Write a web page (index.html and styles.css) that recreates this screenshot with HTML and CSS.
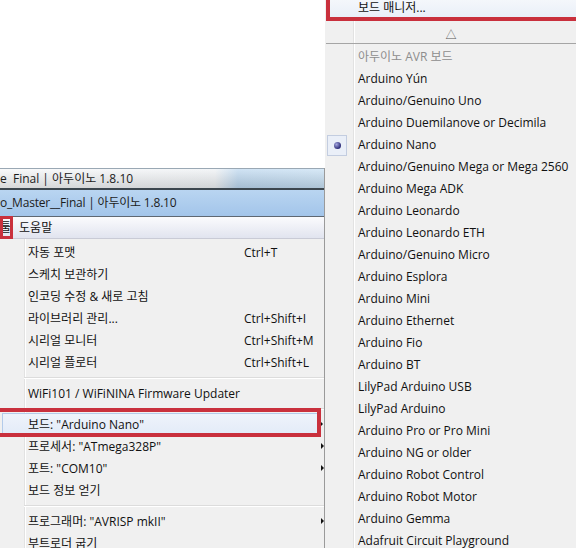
FILE: index.html
```html
<!DOCTYPE html>
<html lang="ko">
  <head>
    <meta charset="UTF-8" />
    <meta name="viewport" content="width=device-width, initial-scale=1.0" />
    <title>아두이노 보드 선택</title>
    <link rel="stylesheet" href="styles.css">
  </head>
  <body>
    <div class="ide">
      <div class="desk"></div>

      <div class="win">
        <div class="title back">e&nbsp;&nbsp;Final | 아두이노 1.8.10</div>
        <div class="title front">o_Master__Final | 아두이노 1.8.10</div>

        <div class="menubar">
          <span class="top">툴</span>
          <span class="top">도움말</span>
        </div>

        <div class="menu">
          <div class="item"><span class="label">자동 포맷</span><span>Ctrl+T</span></div>
          <div class="item"><span class="label">스케치 보관하기</span></div>
          <div class="item"><span class="label">인코딩 수정 &amp; 새로 고침</span></div>
          <div class="item"><span class="label">라이브러리 관리...</span><span>Ctrl+Shift+I</span></div>
          <div class="item"><span class="label">시리얼 모니터</span><span>Ctrl+Shift+M</span></div>
          <div class="item"><span class="label">시리얼 플로터</span><span>Ctrl+Shift+L</span></div>
          <div class="sep"></div>
          <div class="item"><span class="label">WiFi101 / WiFiNINA Firmware Updater</span></div>
          <div class="sep"></div>
          <div class="item hover"><span class="label">보드: "Arduino Nano"</span><i class="sub"></i></div>
          <div class="item"><span class="label">프로세서: "ATmega328P"</span><i class="sub"></i></div>
          <div class="item"><span class="label">포트: "COM10"</span><i class="sub"></i></div>
          <div class="item"><span class="label">보드 정보 얻기</span></div>
          <div class="sep"></div>
          <div class="item"><span class="label">프로그래머: "AVRISP mkII"</span><i class="sub"></i></div>
          <div class="item"><span class="label">부트로더 굽기</span></div>
        </div>
      </div>
    </div>

    <div class="boards">
      <div class="board hover">보드 매니저...</div>
      <div class="scroll">△</div>
      <div class="board group">아두이노 AVR 보드</div>
      <div class="board">Arduino Yún</div>
      <div class="board">Arduino/Genuino Uno</div>
      <div class="board">Arduino Duemilanove or Decimila</div>
      <div class="board picked"><span class="radio"><i></i></span>Arduino Nano</div>
      <div class="board">Arduino/Genuino Mega or Mega 2560</div>
      <div class="board">Arduino Mega ADK</div>
      <div class="board">Arduino Leonardo</div>
      <div class="board">Arduino Leonardo ETH</div>
      <div class="board">Arduino/Genuino Micro</div>
      <div class="board">Arduino Esplora</div>
      <div class="board">Arduino Mini</div>
      <div class="board">Arduino Ethernet</div>
      <div class="board">Arduino Fio</div>
      <div class="board">Arduino BT</div>
      <div class="board">LilyPad Arduino USB</div>
      <div class="board">LilyPad Arduino</div>
      <div class="board">Arduino Pro or Pro Mini</div>
      <div class="board">Arduino NG or older</div>
      <div class="board">Arduino Robot Control</div>
      <div class="board">Arduino Robot Motor</div>
      <div class="board">Arduino Gemma</div>
      <div class="board">Adafruit Circuit Playground</div>
    </div>

    <!-- red callout frames drawn over the menus -->
    <div class="callout tools"></div>
    <div class="callout board-row"></div>
    <div class="callout manager"></div>
  </body>
</html>
```

FILE: styles.css
```css
body {
  margin: 0;
  width: 576px;
  height: 548px;
  overflow: hidden;
  position: relative;
  display: flex;
  background: #ffffff;
  font-family: "Open Sans", "Noto Sans CJK KR", sans-serif;
  font-size: 12px;
  color: #111111;
}

.ide {
  width: 325px;
  flex-shrink: 0;
  display: flex;
  flex-direction: column;
  overflow: hidden;
}

.desk {
  height: 168px;
  flex-shrink: 0;
  background: #ffffff;
}

.win {
  flex: 1;
  display: flex;
  flex-direction: column;
  border-right: 1px solid #9a9a9a;
  overflow: hidden;
}

.win > * {
  flex-shrink: 0;
}

.title {
  white-space: nowrap;
  overflow: hidden;
  font-size: 12px;
  color: #1c1c1c;
}

.title.back {
  height: 19px;
  line-height: 20px;
  border-top: 1px solid #9aa8b4;
  border-bottom: 2px solid #3c464e;
  background:
    linear-gradient(to bottom, rgba(255, 255, 255, 0.3), rgba(0, 0, 0, 0.12)),
    linear-gradient(to right, #f6f7f8 0, #eef1f4 215px, #bcd7ef 238px, #c6dff3 100%);
}

.title.front {
  height: 26px;
  line-height: 25px;
  letter-spacing: -0.2px;
  background: linear-gradient(to bottom, #b9d5f1, #a3c5ea);
}

.menubar {
  height: 21px;
  display: flex;
  gap: 8px;
  border-top: 1px solid #5f6872;
  border-bottom: 1px solid #c9cbd6;
  background: linear-gradient(to bottom, #fbfbfd, #e1e4ef);
}

.top {
  line-height: 22px;
}

.menu {
  flex: 1;
  padding-top: 2px;
  background:
    linear-gradient(to right, transparent 24px, #e2e2e2 24px, #e2e2e2 25px, #ffffff 25px, #ffffff 26px, transparent 26px),
    #f0f0f0;
}

.item {
  height: 22px;
  display: flex;
  align-items: center;
  padding-left: 28px;
  white-space: nowrap;
}

.item .label {
  width: 216px;
}

.item.hover {
  margin: 0 6px 0 2px;
  padding-left: 25px;
  height: 20px;
  border: 1px solid #b3cbea;
  background: linear-gradient(to bottom, #eef3fb, #e3ebf8);
}

.item.hover .label {
  width: auto;
}

.sub {
  margin-left: auto;
  margin-right: 0;
  border-left: 3px solid #111111;
  border-top: 3.5px solid transparent;
  border-bottom: 3.5px solid transparent;
}

.item.hover .sub {
  margin-right: -6px;
}

.sep {
  height: 9px;
  margin-left: 24px;
  background: linear-gradient(to bottom, transparent 4px, #dcdcdc 4px, #dcdcdc 5px, #ffffff 5px, #ffffff 6px, transparent 6px);
}

.boards {
  flex: 1;
  background:
    linear-gradient(to right, transparent 28px, #e2e2e2 28px, #e2e2e2 29px, #ffffff 29px, #ffffff 30px, transparent 30px),
    #f0f0f0;
  white-space: nowrap;
}

.board {
  height: 22px;
  line-height: 22px;
  padding-left: 33px;
  display: flex;
  align-items: center;
}

.board.hover {
  height: 13px;
  line-height: 13px;
  padding: 1px 0 5px 30px;
  margin-left: 3px;
  align-items: flex-start;
  background: linear-gradient(to bottom, #f4f7fb, #e8eef8);
  border-bottom: 1px solid #c6d6ee;
}

.scroll {
  height: 16px;
  padding-top: 7px;
  line-height: 16px;
  text-align: center;
  font-size: 11px;
  color: #555555;
  border-bottom: 1px solid #a5a5a5;
  margin: 0 0 2px 1px;
}

.board.group {
  color: #8d8d8d;
}

.board.picked {
  padding-left: 2px;
}

.radio {
  width: 20px;
  height: 21px;
  margin-right: 11px;
  box-sizing: border-box;
  border: 1px solid #c3cde0;
  background: #eaeff8;
  display: flex;
  align-items: center;
  justify-content: center;
}

.radio i {
  width: 7px;
  height: 7px;
  border-radius: 50%;
  background: radial-gradient(circle at 35% 35%, #a6a8e0, #2c2c78 70%);
}

.callout {
  position: absolute;
  box-sizing: border-box;
  border: 3px solid #c9303d;
}

.callout.tools {
  left: 0;
  top: 216px;
  width: 13px;
  height: 23px;
}

.callout.board-row {
  left: -10px;
  top: 408px;
  width: 331px;
  height: 29px;
  border-width: 4px;
}

.callout.manager {
  left: 326px;
  top: -10px;
  width: 260px;
  height: 31px;
  border-width: 4px;
}
```
